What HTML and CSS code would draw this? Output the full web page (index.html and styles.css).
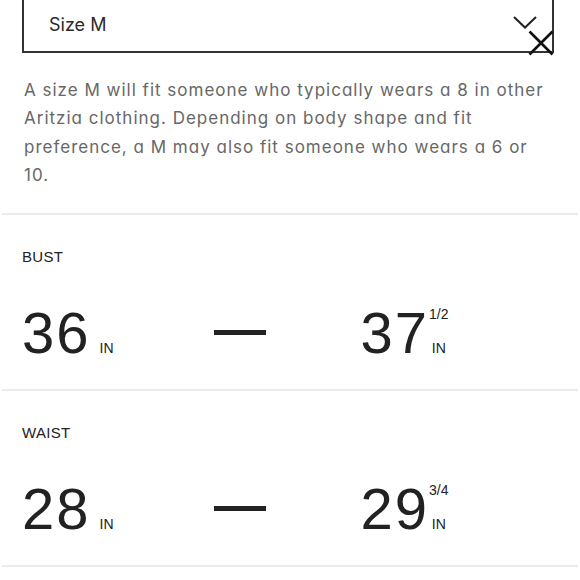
FILE: index.html
```html
<!DOCTYPE html>
<html lang="en">
<head>
<meta charset="utf-8">
<title>Size guide</title>
<link rel="stylesheet" href="styles.css">
</head>
<body>
<div class="page">
  <div class="select">
    <span class="select-value">Size M</span>
    <svg class="chevron" width="24" height="13" viewBox="0 0 24 13" aria-hidden="true">
      <polyline points="1,1 12,11.5 23,1" fill="none" stroke="#222" stroke-width="2"/>
    </svg>
    <button class="close" aria-label="Close">
      <svg width="26" height="26" viewBox="0 0 26 26" aria-hidden="true">
        <path d="M1.5 1.5 L24.5 24.5 M1.5 24.5 L24.5 1.5" fill="none" stroke="#111" stroke-width="2.6"/>
      </svg>
    </button>
  </div>

  <p class="fit-note">A size M will fit someone who typically wears a 8 in other Aritzia clothing. Depending on body shape and fit preference, a M may also fit someone who wears a 6 or 10.</p>

  <section class="measure">
    <h3 class="measure-label">BUST</h3>
    <div class="range">
      <span class="num">36</span><span class="unit">IN</span>
      <span class="dash"></span>
      <span class="num">37</span>
      <span class="unit-stack"><span class="frac">1/2</span><span class="unit">IN</span></span>
    </div>
  </section>

  <section class="measure">
    <h3 class="measure-label">WAIST</h3>
    <div class="range">
      <span class="num">28</span><span class="unit">IN</span>
      <span class="dash"></span>
      <span class="num">29</span>
      <span class="unit-stack"><span class="frac">3/4</span><span class="unit">IN</span></span>
    </div>
  </section>
  <div class="end-rule"></div>
</div>
</body>
</html>
```

FILE: styles.css
```css
* { box-sizing: border-box; }

html, body {
  margin: 0;
  background: #fff;
}

body {
  font-family: Inter, "Noto Sans", sans-serif;
  font-feature-settings: "cv11" 1;
  color: #222;
  overflow: hidden;
}

.page {
  width: 580px;
  position: relative;
}

.select {
  position: relative;
  display: flex;
  align-items: center;
  justify-content: space-between;
  margin: -6px 26px 0 22px;
  height: 59px;
  border: 2px solid #333;
  padding: 0 15px 0 25px;
}

.select-value {
  font-size: 18px;
  color: #2a2a2a;
  line-height: 22px;
  padding-top: 2px;
}

.chevron {
  display: block;
  margin-bottom: 3px;
}

.close {
  position: absolute;
  right: -2px;
  bottom: -5px;
  width: 26px;
  height: 26px;
  padding: 0;
  border: 0;
  background: transparent;
}

.close svg { display: block; }

.fit-note {
  margin: 23px 30px 24px 24px;
  font-size: 17px;
  letter-spacing: 1px;
  line-height: 28.3px;
  color: #676767;
}

.measure {
  margin: 0 2px;
  border-top: 2px solid #ebebeb;
  padding: 33px 20px 27px;
}

.measure-label {
  margin: 0;
  font-family: "Liberation Sans", Arial, sans-serif;
  font-weight: 400;
  font-size: 15px;
  line-height: 18px;
  letter-spacing: 0.3px;
  color: #222;
}

.range {
  display: flex;
  align-items: last baseline;
  margin-top: 38px;
  font-family: "Liberation Sans", Arial, sans-serif;
  color: #222;
}

.num {
  font-size: 58px;
  line-height: 58px;
  letter-spacing: 2px;
}

.unit {
  font-size: 14px;
  line-height: 16px;
}

.num + .unit {
  margin-left: 9px;
}

.dash {
  align-self: flex-start;
  width: 52px;
  height: 5px;
  margin: 26px 95px 0 100px;
  background: #222;
}

.unit-stack {
  display: flex;
  flex-direction: column;
  align-items: center;
  gap: 18px;
  margin-left: 0;
}

.frac {
  font-size: 14px;
  line-height: 16px;
}

.end-rule {
  margin: 0 2px;
  border-top: 2px solid #ebebeb;
  height: 20px;
}
```
